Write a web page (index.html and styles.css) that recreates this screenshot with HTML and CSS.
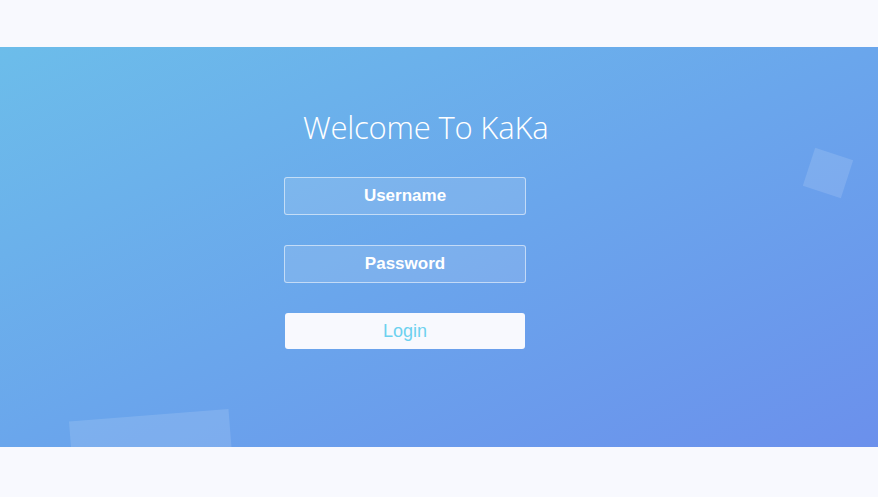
FILE: index.html
```html
<!DOCTYPE html>
<html>
<head>
<meta charset="utf-8">
<link rel="stylesheet" href="styles.css">
</head>
<body>
<div class="top"></div>
<div class="banner">
  <div class="square sq1"></div>
  <div class="square sq2"></div>
  <h1 class="title">Welcome To KaKa</h1>
  <form class="form">
    <input class="field" type="text" placeholder="Username">
    <input class="field" type="password" placeholder="Password">
    <button class="login" type="button">Login</button>
  </form>
</div>
<div class="bottom"></div>
</body>
</html>
```
FILE: styles.css
```css
html, body {
  margin: 0;
  padding: 0;
  background: #f8f9fe;
  font-family: "Liberation Sans", Arial, sans-serif;
}
.top { height: 47px; }
.bottom { height: 50px; }
.banner {
  position: relative;
  overflow: hidden;
  height: 400px;
  background: linear-gradient(to bottom right, #6cbdea 0%, #6aa6ec 50%, #6b90ec 100%);
  display: flex;
  flex-direction: column;
  align-items: flex-start;
  padding-left: 284px;
  box-sizing: border-box;
}
.title {
  margin: 58px 0 0 19px;
  font-family: "Open Sans", sans-serif;
  font-weight: 300;
  font-size: 31px;
  line-height: 44px;
  color: #ffffff;
  letter-spacing: -0.2px;
}
.form {
  margin-top: 28px;
  display: flex;
  flex-direction: column;
  width: 242px;
}
.field {
  box-sizing: border-box;
  width: 242px;
  height: 38px;
  margin: 0 0 30px 0;
  border: 1px solid rgba(255,255,255,0.55);
  border-radius: 3px;
  background: rgba(225,235,245,0.15);
  text-align: center;
  font-family: "Liberation Sans", Arial, sans-serif;
  font-size: 17px;
  font-weight: bold;
  color: #fff;
  outline: none;
}
.field::placeholder { color: #ffffff; opacity: 1; }
.login {
  box-sizing: border-box;
  width: 240px;
  height: 36px;
  margin: 0 0 0 1px;
  border: 0;
  border-radius: 3px;
  background: #f8f9fe;
  color: #6dd1ef;
  font-family: "Liberation Sans", Arial, sans-serif;
  font-size: 18px;
  cursor: pointer;
}
.square {
  position: absolute;
  background: rgba(255,255,255,0.13);
}
.sq1 {
  left: 808px;
  top: 106px;
  width: 40px;
  height: 40px;
  transform: rotate(18deg);
}
.sq2 {
  left: 75px;
  top: 368px;
  width: 160px;
  height: 160px;
  transform: rotate(-4.5deg);
}
```
